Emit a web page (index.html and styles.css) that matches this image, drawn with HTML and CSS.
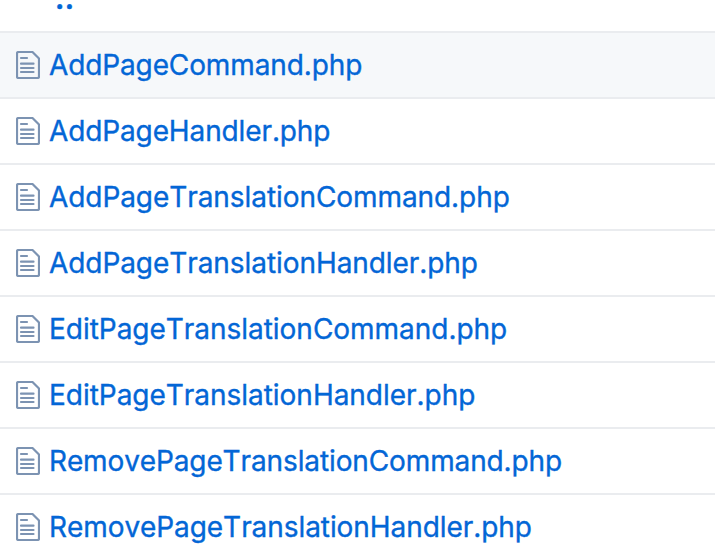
FILE: index.html
```html
<!DOCTYPE html>
<html lang="en">
<head>
<meta charset="utf-8">
<title>Files</title>
<link rel="stylesheet" href="styles.css">
</head>
<body>
<svg class="defs" width="0" height="0"><symbol id="file" viewBox="0 0 24 28"><path d="M2.500 1H16.500L23 7.500V25.500Q23 27 21.500 27H2.500Q1 27 1 25.500V2.500Q1 1 2.500 1Z"/><path d="M5 7H11M5 12.700H17.500M5 17H17.500M5 21H17.500"/></symbol></svg>
<ul class="files">
<li class="parent"><a class="up">..</a></li>
<li class="row active"><svg class="icon"><use href="#file"/></svg><a>AddPageCommand.php</a></li>
<li class="row"><svg class="icon"><use href="#file"/></svg><a>AddPageHandler.php</a></li>
<li class="row"><svg class="icon"><use href="#file"/></svg><a class="loose">AddPageTranslationCommand.php</a></li>
<li class="row"><svg class="icon"><use href="#file"/></svg><a class="loose">AddPageTranslationHandler.php</a></li>
<li class="row"><svg class="icon"><use href="#file"/></svg><a class="looser">EditPageTranslationCommand.php</a></li>
<li class="row"><svg class="icon"><use href="#file"/></svg><a class="looser">EditPageTranslationHandler.php</a></li>
<li class="row"><svg class="icon"><use href="#file"/></svg><a>RemovePageTranslationCommand.php</a></li>
<li class="row"><svg class="icon"><use href="#file"/></svg><a class="loose">RemovePageTranslationHandler.php</a></li>
</ul>
</body>
</html>
```
FILE: styles.css
```css
* { box-sizing: border-box; }
body { margin: 0; height: 553px; background: #fff; overflow: hidden; font-family: Inter, sans-serif; font-size: 28px; font-weight: 400; font-kerning: none; letter-spacing: -0.12px; color: #0366d6; -webkit-text-stroke: 0.35px #0366d6; }
.defs { display: block; }
.files { list-style: none; margin: 0; padding: 0; }
.parent { display: flex; align-items: flex-end; height: 31px; padding: 0 0 26px 55px; }
.up { font-weight: 700; line-height: 12px; letter-spacing: 0.5px; }
.row { display: flex; align-items: center; height: 66px; border-top: 2px solid #eaecef; padding-left: 16px; white-space: nowrap; }
.row.active { background: #f6f8fa; }
.icon { width: 24px; height: 28px; margin-right: 9px; fill: none; stroke: #7c93b2; stroke-width: 2.2; stroke-linecap: round; stroke-linejoin: round; flex: none; overflow: visible; }
.loose { letter-spacing: -0.07px; }
.looser { letter-spacing: -0.03px; }
```
